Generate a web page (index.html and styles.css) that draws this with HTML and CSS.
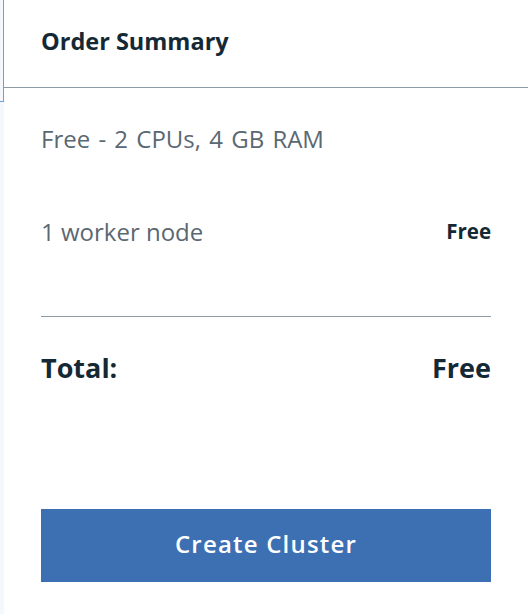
FILE: index.html
```html
<!DOCTYPE html>
<html>
<head>
<meta charset="utf-8">
<link rel="stylesheet" href="styles.css">
</head>
<body>
<div class="page">
  <div class="rail"><div class="rail-box"></div></div>
  <section class="summary">
    <header class="summary-header">
      <h2 class="summary-title">Order Summary</h2>
    </header>
    <div class="summary-body">
      <p class="plan">Free - 2 CPUs, 4 GB RAM</p>
      <div class="line-item">
        <span class="line-label">1 worker node</span>
        <span class="line-price">Free</span>
      </div>
      <hr class="divider">
      <div class="total">
        <span>Total:</span>
        <span>Free</span>
      </div>
      <button class="create-btn" type="button">Create Cluster</button>
    </div>
  </section>
</div>
</body>
</html>
```
FILE: styles.css
```css
html, body {
  margin: 0;
  padding: 0;
  height: 100%;
}
body {
  background: #f4f7fb;
  font-family: "Open Sans", "Noto Sans", sans-serif;
  color: #152935;
}
.page {
  display: flex;
  min-height: 614px;
}
.rail {
  width: 4px;
  flex: none;
}
.rail-box {
  height: 101px;
  border-right: 1px solid #6a9fe0;
  border-bottom: 1px solid #6a9fe0;
  box-sizing: content-box;
  width: 3px;
}
.summary {
  flex: 1;
  background: #fff;
}
.summary-header {
  border-bottom: 1px solid #8c9ba5;
  display: flex;
  align-items: center;
  padding-left: 37px;
  box-sizing: border-box;
  height: 88px;
}
.summary-title {
  margin: 0 0 6px;
  font-size: 23.5px;
  font-weight: 700;
  color: #152935;
}
.summary-body {
  padding: 0 37px;
  display: flex;
  flex-direction: column;
}
.plan {
  margin: 37px 0 0;
  font-size: 24px;
  line-height: 28px;
  word-spacing: 2px;
  color: #5a6872;
}
.line-item {
  display: flex;
  justify-content: space-between;
  align-items: center;
  margin-top: 65px;
  height: 28px;
}
.line-label {
  font-size: 24px;
  color: #5a6872;
  margin-top: -1px;
}
.line-price {
  font-size: 20.5px;
  font-weight: 700;
  color: #152935;
  margin-top: -2px;
}
.divider {
  border: 0;
  border-top: 1px solid #8c9ba5;
  margin: 70px 0 0;
}
.total {
  display: flex;
  justify-content: space-between;
  align-items: center;
  margin-top: 35px;
  height: 30px;
  font-size: 27px;
  font-weight: 700;
  color: #152935;
}
.create-btn {
  margin-top: 127px;
  height: 73px;
  padding: 0 0 4px;
  border: 0;
  background: #3d70b2;
  color: #fff;
  font-family: inherit;
  font-size: 24px;
  font-weight: 600;
  letter-spacing: 1.2px;
  cursor: pointer;
}
```
